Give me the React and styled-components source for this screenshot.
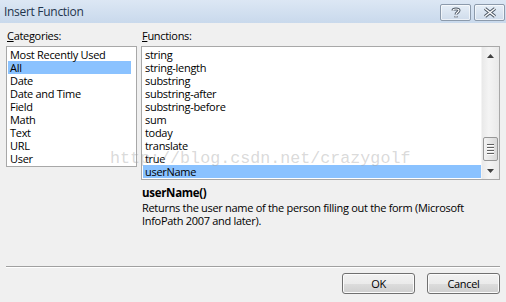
import React from 'react';
import styled, { createGlobalStyle } from 'styled-components';

const GlobalStyle = createGlobalStyle`
  html, body {
    margin: 0;
    padding: 0;
    background: #f0f0f0;
  }
  body {
    font-family: 'Open Sans', 'Noto Sans', sans-serif;
    font-size: 11px;
    letter-spacing: -0.3px;
    color: #000;
  }
`;

const Dialog = styled('div')`
  position: relative;
  width: 506px;
  height: 302px;
  background: #f0f0f0;
  display: flex;
  flex-direction: column;
  overflow: hidden;
`;

const TitleBar = styled('div')`
  height: 23px;
  display: flex;
  align-items: center;
  justify-content: space-between;
  padding: 0 1px 0 4px;
  background: linear-gradient(#dce7f4, #c9d9ec);
`;

const Title = styled('div')`
  font-size: 12px;
  color: #1f344c;
  letter-spacing: -0.3px;
`;

const TitleButtons = styled('div')`
  display: flex;
  gap: 3px;
  align-self: flex-start;
  margin-top: 4px;
`;

const CaptionButton = styled('div')`
  width: 29px;
  height: 15px;
  border: 1px solid #8c9aab;
  border-radius: 2px;
  background: linear-gradient(#e6eef7, #cfdceb);
  box-shadow: inset 0 0 0 1px rgba(255, 255, 255, 0.6);
  display: flex;
  align-items: center;
  justify-content: center;
`;

const Body = styled('div')`
  flex: 1;
  display: flex;
  flex-direction: column;
  padding: 5px 6px 8px 6px;
`;

const Columns = styled('div')`
  display: flex;
  gap: 4px;
`;

const Column = styled('div')`
  display: flex;
  flex-direction: column;
  width: ${(props) => props.width}px;
`;

const Label = styled('div')`
  height: 15px;
  line-height: 15px;
  padding-left: ${(props) => props.indent || 1}px;
  margin-bottom: 3px;
  u {
    text-decoration: underline;
  }
`;

const ListBox = styled('div')`
  height: ${(props) => props.height}px;
  border: 1px solid #a8a8a8;
  background: #fff;
  display: flex;
  box-sizing: border-box;
`;

const Items = styled('div')`
  flex: 1;
  padding: 1px ${(props) => props.padRight || 0}px 0 1px;
`;

const Item = styled('div')`
  height: 13px;
  line-height: 13px;
  padding-left: 2px;
  white-space: nowrap;
  background: ${(props) => (props.selected ? '#8ac2ff' : 'transparent')};
`;

const ScrollBar = styled('div')`
  width: 17px;
  display: flex;
  flex-direction: column;
  align-items: center;
  background: linear-gradient(90deg, #e9e9e9, #f4f4f4 40%, #e9e9e9);
  border-left: 1px solid #f4f4f4;
`;

const Arrow = styled('div')`
  height: 17px;
  width: 17px;
  display: flex;
  align-items: center;
  justify-content: center;
`;

const Track = styled('div')`
  flex: 1;
  display: flex;
  flex-direction: column;
  justify-content: flex-end;
  padding-bottom: 1px;
`;

const Thumb = styled('div')`
  width: 13px;
  height: 22px;
  border: 1px solid #979797;
  border-radius: 2px;
  background: linear-gradient(90deg, #f3f3f3, #e6e6e6 50%, #d8d8d8);
  display: flex;
  flex-direction: column;
  align-items: center;
  justify-content: center;
  gap: 1px;
`;

const Grip = styled('div')`
  width: 7px;
  height: 1px;
  background: #606060;
  box-shadow: 0 1px 0 #fff;
  margin-bottom: 1px;
`;

const Description = styled('div')`
  padding: 5px 0 0 1px;
`;

const FnName = styled('div')`
  font-weight: bold;
  font-size: 11.5px;
  height: 16px;
  line-height: 16px;
`;

const FnText = styled('div')`
  line-height: 13px;
  width: 340px;
`;

const Spacer = styled('div')`
  flex: 1;
`;

const Separator = styled('div')`
  height: 0;
  border-top: 1px solid #a0a0a0;
  border-bottom: 1px solid #fff;
  margin-bottom: 5px;
`;

const Footer = styled('div')`
  display: flex;
  justify-content: flex-end;
  gap: 12px;
`;

const Button = styled('button')`
  width: 73px;
  height: 21px;
  border: 1px solid #707070;
  border-radius: 3px;
  background: linear-gradient(#f2f2f2 0%, #ebebeb 50%, #dddddd 51%, #cfcfcf 100%);
  box-shadow: inset 0 0 0 1px #fbfbfb;
  font-family: 'Open Sans', 'Noto Sans', sans-serif;
  font-size: 11px;
  letter-spacing: -0.3px;
  color: #000;
  padding: 0;
`;

const Watermark = styled('div')`
  position: absolute;
  left: 110px;
  top: 149px;
  font-family: 'Liberation Mono', monospace;
  font-size: 16.7px;
  letter-spacing: 0;
  color: rgba(160, 160, 160, 0.4);
  pointer-events: none;
  white-space: nowrap;
`;

const CATEGORIES = [
  'Most Recently Used',
  'All',
  'Date',
  'Date and Time',
  'Field',
  'Math',
  'Text',
  'URL',
  'User',
];

const FUNCTIONS = [
  'string',
  'string-length',
  'substring',
  'substring-after',
  'substring-before',
  'sum',
  'today',
  'translate',
  'true',
  'userName',
];

const HelpIcon = () => (
  <svg width="10" height="12" viewBox="0 0 10 12">
    <path
      d="M2 3.5 C2 1.5 8 1.5 8 3.5 C8 5 5 5.5 5 7.5 M5 9 L5 10.5"
      fill="none"
      stroke="#4a5562"
      strokeWidth="3"
    />
    <path
      d="M2 3.5 C2 1.5 8 1.5 8 3.5 C8 5 5 5.5 5 7.5 M5 9 L5 10.5"
      fill="none"
      stroke="#fff"
      strokeWidth="1.2"
    />
  </svg>
);

const CloseIcon = () => (
  <svg width="14" height="11" viewBox="0 0 14 11">
    <path d="M2 1.5 L12 9.5 M12 1.5 L2 9.5" stroke="#4a5562" strokeWidth="3.4" />
    <path d="M2 1.5 L12 9.5 M12 1.5 L2 9.5" stroke="#fff" strokeWidth="1.4" />
  </svg>
);

const Tri = ({ up }) => (
  <svg width="7" height="4" viewBox="0 0 7 4">
    <path d={up ? 'M0 4 L3.5 0 L7 4 Z' : 'M0 0 L7 0 L3.5 4 Z'} fill="#404040" />
  </svg>
);

export default function App() {
  return (
    <>
      <GlobalStyle />
      <Dialog>
        <TitleBar>
          <Title>Insert Function</Title>
          <TitleButtons>
            <CaptionButton>
              <HelpIcon />
            </CaptionButton>
            <CaptionButton>
              <CloseIcon />
            </CaptionButton>
          </TitleButtons>
        </TitleBar>
        <Body>
          <Columns>
            <Column width={131}>
              <Label>
                <u>C</u>ategories:
              </Label>
              <ListBox height={121}>
                <Items padRight={5}>
                  {CATEGORIES.map((c) => (
                    <Item key={c} selected={c === 'All'}>
                      {c}
                    </Item>
                  ))}
                </Items>
              </ListBox>
            </Column>
            <Column width={359}>
              <Label indent={0}>
                <u>F</u>unctions:
              </Label>
              <ListBox height={134}>
                <Items>
                  {FUNCTIONS.map((f) => (
                    <Item key={f} selected={f === 'userName'}>
                      {f}
                    </Item>
                  ))}
                </Items>
                <ScrollBar>
                  <Arrow>
                    <Tri up />
                  </Arrow>
                  <Track>
                    <Thumb>
                      <Grip />
                      <Grip />
                      <Grip />
                      <Grip />
                    </Thumb>
                  </Track>
                  <Arrow>
                    <Tri />
                  </Arrow>
                </ScrollBar>
              </ListBox>
              <Description>
                <FnName>userName()</FnName>
                <FnText>
                  Returns the user name of the person filling out the form (Microsoft
                  InfoPath 2007 and later).
                </FnText>
              </Description>
            </Column>
          </Columns>
          <Spacer />
          <Separator />
          <Footer>
            <Button>OK</Button>
            <Button>Cancel</Button>
          </Footer>
        </Body>
        <Watermark>http://blog.csdn.net/crazygolf</Watermark>
      </Dialog>
    </>
  );
}
